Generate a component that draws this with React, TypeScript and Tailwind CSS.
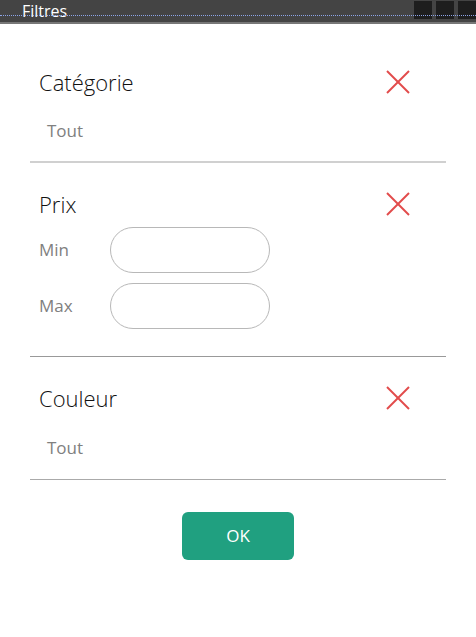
import { Fragment } from "react";

function CloseIcon() {
  return (
    <svg width="24" height="24" viewBox="0 0 24 24" className="shrink-0">
      <line x1="1" y1="1" x2="23" y2="23" stroke="#e24b4b" strokeWidth="2" />
      <line x1="23" y1="1" x2="1" y2="23" stroke="#e24b4b" strokeWidth="2" />
    </svg>
  );
}

function Header({ title }: { title: string }) {
  return (
    <div className="flex h-[30px] items-center justify-between pl-[9px] pr-[36px]">
      <span className="text-[22px] font-light leading-[30px] text-[#111]">{title}</span>
      <CloseIcon />
    </div>
  );
}

function PriceInput({ label }: { label: string }) {
  return (
    <div className="flex items-center pl-[9px]">
      <span className="w-[71px] text-[17px] text-[#808080]">{label}</span>
      <div className="h-[46px] w-[160px] rounded-full border-[1.5px] border-[#b8b8b8]" />
    </div>
  );
}

export default function App() {
  return (
    <div
      className="h-[637px] w-[476px] bg-white"
      style={{ fontFamily: '"Open Sans", "Noto Sans", sans-serif' }}
    >
      <div className="relative flex h-[24px] items-start border-b-2 border-[#777] bg-[#444]">
        <span className="ml-[22px] mt-[1px] text-[16px] leading-[20px] text-white">Filtres</span>
        <div className="ml-auto flex gap-[4px] pt-[1px]">
          <div className="h-[18px] w-[18px] bg-[#1e1e1e]" />
          <div className="h-[18px] w-[18px] bg-[#1e1e1e]" />
          <div className="h-[18px] w-[18px] bg-[#1e1e1e]" />
        </div>
        <div className="absolute left-0 right-0 top-[15px] border-t border-dotted border-[#8ca4e8]" />
      </div>

      <div className="flex flex-col px-[30px]">
        <div className="mt-[43px]">
          <Header title="Catégorie" />
        </div>
        <div className="mt-[22px] pl-[17px] text-[17px] leading-[24px] text-[#808080]">Tout</div>
        <div className="mt-[18px] h-[2px] bg-[#d0d0d0]" />

        <div className="mt-[26px]">
          <Header title="Prix" />
        </div>
        <div className="mt-[8px] flex flex-col gap-[10px]">
          {["Min", "Max"].map((l) => (
            <Fragment key={l}>
              <PriceInput label={l} />
            </Fragment>
          ))}
        </div>
        <div className="mt-[27px] h-px bg-[#999]" />

        <div className="mt-[26px]">
          <Header title="Couleur" />
        </div>
        <div className="mt-[23px] pl-[17px] text-[17px] leading-[24px] text-[#808080]">Tout</div>
        <div className="mt-[19px] h-px bg-[#aaa]" />

        <div className="mt-[32px] flex justify-center">
          <button className="h-[48px] w-[112px] rounded-[6px] bg-[#20a080] text-[17px] text-white">
            OK
          </button>
        </div>
      </div>
    </div>
  );
}
